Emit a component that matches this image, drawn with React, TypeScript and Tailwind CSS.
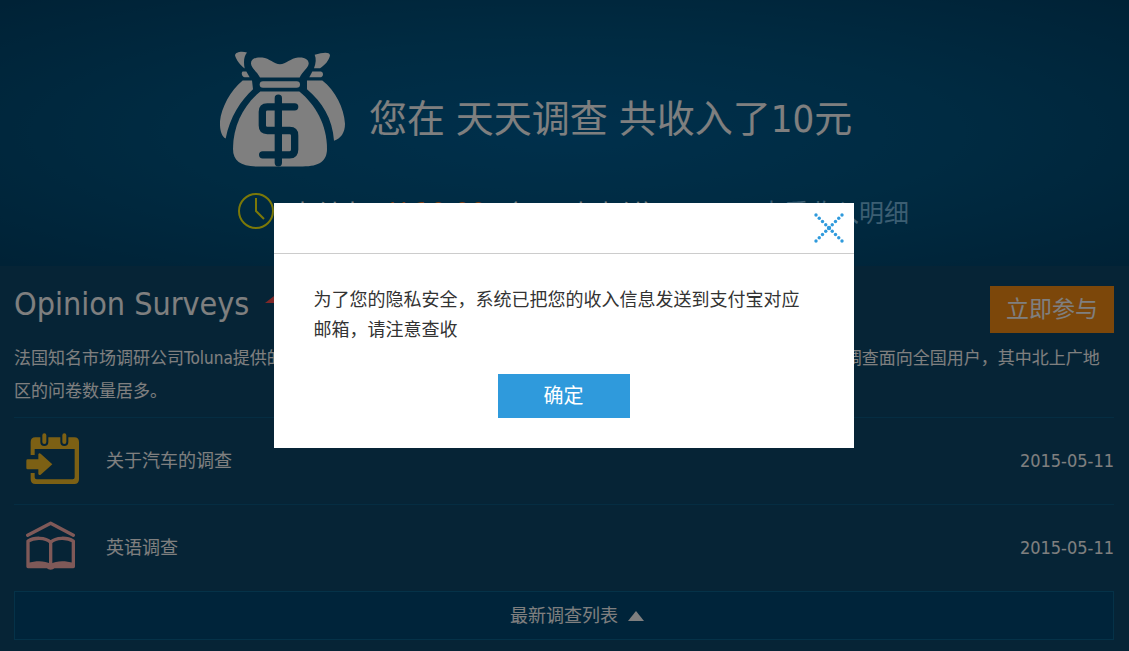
import { useState } from 'react';

interface Survey {
  id: number;
  title: string;
  date: string;
  icon: 'calendar' | 'book';
}

const surveys: Survey[] = [
  { id: 1, title: '关于汽车的调查', date: '2015-05-11', icon: 'calendar' },
  { id: 2, title: '英语调查', date: '2015-05-11', icon: 'book' }
];

function MoneyBagIcon() {
  return (
    <svg viewBox="30 32 375 347" className="h-[116px] w-[125px] shrink-0" fill="#fff" aria-hidden="true">
      {/* bags behind */}
      <path d="M75 44C77 34 95 31 111 36C102 46 100 64 104 84C92 74 78 58 75 44Z" />
      <path d="M360 44C358 34 340 35 314 43C319 54 318 68 312 83H330C345 74 358 58 360 44Z" />
      <path d="M98 93H109L119 110H104C95 110 93 95 98 93Z" />
      <path d="M307 93H333C341 95 341 108 333 110H298Z" />
      <path d="M98 120H126L129 146C92 180 60 228 47 294C34 287 29 268 30 242C34 202 62 148 98 120Z" />
      <path d="M291 120H337C376 150 402 202 405 250C405 278 392 294 372 301C368 234 336 184 291 146Z" />
      {/* front bag */}
      <path d="M123 70C122 55 137 49 157 51C178 53 192 71 210 71C228 71 242 53 264 51C284 49 297 57 296 70C295 82 278 93 269 111H150C143 96 124 83 123 70Z" />
      <rect x="149" y="122" width="121" height="20" rx="10" />
      <path d="M151 153H268C315 191 351 252 351 325C351 362 328 378 278 378H142C92 378 69 362 69 325C69 252 104 191 151 153Z" />
      <path
        d="M205 173V367M254 199H172Q157 199 157 214V255Q157 270 172 270H239Q254 270 254 285V327Q254 343 239 343H158"
        fill="none"
        stroke="#005482"
        strokeWidth="22"
        strokeLinecap="round"
      />
    </svg>
  );
}

function ClockIcon() {
  return (
    <svg viewBox="0 0 36 36" className="size-9 shrink-0" fill="none" stroke="#f6f010" strokeWidth="2" aria-hidden="true">
      <circle cx="18" cy="18" r="17" />
      <path d="M18 5V18L26 26" />
    </svg>
  );
}

function CalendarIcon() {
  return (
    <svg viewBox="75 65 159 156" className="h-[52px] w-[53px]" fill="#f8c028" aria-hidden="true">
      <path
        fillRule="evenodd"
        d="M103 78H220Q234 78 234 92V204Q234 218 220 218H103Q89 218 89 204V185H101V198Q101 204 107 204H215Q221 204 221 198V113H101V131H89V92Q89 78 103 78Z"
      />
      <path d="M130 72V92M190 72V92" stroke="#0c486c" strokeWidth="24" strokeLinecap="round" />
      <path d="M130 72V92M190 72V92" stroke="#f8c028" strokeWidth="12" strokeLinecap="round" />
      <path d="M80 144H112V129Q114 124 119 127L154 159L119 190Q114 193 112 188V174H80Q76 174 76 170V148Q76 144 80 144Z" />
    </svg>
  );
}

function BookIcon() {
  return (
    <svg
      viewBox="81 332 147 149"
      className="h-[50px] w-[49px]"
      fill="none"
      stroke="#ffb2b0"
      strokeWidth="10"
      strokeLinecap="round"
      strokeLinejoin="round"
      aria-hidden="true"
    >
      <path d="M86 374L155 338L223 374" />
      <path d="M155 395C139 380 105 380 87 392V468H223V392C205 380 171 380 155 395V460" />
      <path
        d="M87 457C112 450 138 450 155 460C172 450 198 450 223 457V472H167C162 480 148 480 143 472H87Z"
        fill="#ffb2b0"
        stroke="none"
      />
    </svg>
  );
}

function CloseIcon() {
  const steps = [0, 1, 2, 3, 4, 5, 6, 7, 8];
  return (
    <svg viewBox="0 0 30 30" className="size-[30px]" fill="#2f9adc" aria-hidden="true">
      {steps.map(i => (
        <g key={i}>
          <circle cx={2 + i * 3.25} cy={2 + i * 3.25} r="1.7" />
          <circle cx={28 - i * 3.25} cy={2 + i * 3.25} r="1.7" />
        </g>
      ))}
      <circle cx="15" cy="15" r="2.2" />
    </svg>
  );
}

function IncomeBanner() {
  return (
    <header className="h-[266px] bg-[radial-gradient(ellipse_at_center,#006098_0%,#005684_50%,#00446c_100%)] px-4 pt-[51px]">
      <div className="mx-auto max-w-[689px]">
        <div className="flex items-center gap-6">
          <MoneyBagIcon />
          <h1 className="pt-5 text-[38px] leading-[48px] whitespace-nowrap">您在 天天调查 共收入了10元</h1>
        </div>
        <div className="mt-[26px] flex items-start pl-4.5 text-[25px] leading-[42px]">
          <ClockIcon />
          <p className="ml-4 whitespace-nowrap">
            支付中：<span className="text-[28px] text-[#ff7f27]">¥ 10.00</span> （一天内支付）
          </p>
          <a href="#income" className="ml-auto whitespace-nowrap text-[#78bce4]">
            查看收入明细
          </a>
        </div>
      </div>
    </header>
  );
}

function SurveyRow({ survey }: { survey: Survey }) {
  return (
    <li className="flex h-[87px] items-center border-t border-[#0a5a84] text-lg">
      <span className="flex w-[92px] pb-1 pl-3">
        {survey.icon === 'calendar' ? <CalendarIcon /> : <BookIcon />}
      </span>
      <a href={`#survey-${survey.id}`}>{survey.title}</a>
      <time dateTime={survey.date} className="ml-auto">
        {survey.date}
      </time>
    </li>
  );
}

function Dialog({ onClose }: { onClose: () => void }) {
  return (
    <div className="fixed inset-0 flex items-center justify-center bg-black/50 pr-0.5">
      <div role="dialog" aria-modal="true" aria-describedby="dialog-text" className="w-[580px] max-w-full bg-white text-[#333]">
        <div className="flex h-[51px] items-center justify-end border-b border-[#ccc] pr-2.5">
          <button type="button" onClick={onClose} aria-label="关闭">
            <CloseIcon />
          </button>
        </div>
        <div className="px-10 pt-[31px] pb-[30px]">
          <p id="dialog-text" className="text-lg leading-[30px]">
            为了您的隐私安全，系统已把您的收入信息发送到支付宝对应邮箱，请注意查收
          </p>
          <div className="mt-[29px] flex justify-center">
            <button type="button" onClick={onClose} className="h-11 w-[132px] bg-[#2f9adc] text-xl text-white">
              确定
            </button>
          </div>
        </div>
      </div>
    </div>
  );
}

export default function App() {
  const [open, setOpen] = useState(true);

  return (
    <div className="min-h-screen bg-[#0c486c] font-['DejaVu_Sans_Condensed','Noto_Sans_CJK_SC',sans-serif] text-white">
      <IncomeBanner />
      <main className="pt-5 pr-[15px] pb-2 pl-3.5">
        <div className="flex items-start justify-between">
          <div className="flex items-center gap-4">
            <h2 className="text-[32px] leading-9">Opinion Surveys</h2>
            <svg viewBox="0 0 18 12" className="mb-3 h-3 w-[18px]" fill="#ff5050" aria-hidden="true">
              <path d="M0 11L13 1V11Z" />
            </svg>
          </div>
          <button type="button" className="h-[47px] bg-[#f88e14] px-4 text-[23px]">
            立即参与
          </button>
        </div>
        <p className="my-[9px] text-[17px] leading-[33px]">
          法国知名市场调研公司Toluna提供的专业在线问卷调查服务，会员完成问卷即可获得积分，积分可兑换现金，该调查面向全国用户，其中北上广地区的问卷数量居多。
        </p>
        <ul>
          {surveys.map(survey => (
            <SurveyRow key={survey.id} survey={survey} />
          ))}
        </ul>
        <button
          type="button"
          className="grid h-[49px] w-full grid-cols-[1fr_auto_1fr] items-center gap-2.5 border border-[#0a6490] bg-[#004874] text-lg"
        >
          <span className="col-start-2">最新调查列表</span>
          <svg viewBox="0 0 16 10" className="h-2.5 w-4" fill="#fff" aria-hidden="true">
            <path d="M8 0L16 10H0Z" />
          </svg>
        </button>
      </main>
      {open && <Dialog onClose={() => setOpen(false)} />}
    </div>
  );
}
